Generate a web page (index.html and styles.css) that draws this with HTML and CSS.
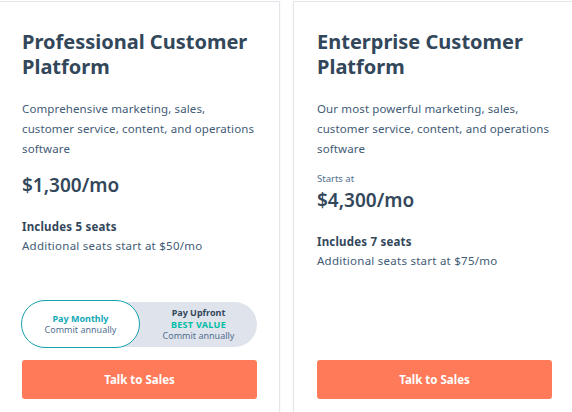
FILE: index.html
```html
<!DOCTYPE html>
<html lang="en">
<head>
<meta charset="utf-8">
<title>Plans</title>
<link rel="stylesheet" href="styles.css">
</head>
<body>
<div class="plans">
  <div class="card">
    <h2 class="title">Professional Customer Platform</h2>
    <p class="desc">Comprehensive marketing, sales, customer service, content, and operations software</p>
    <div class="price">$1,300/mo</div>
    <div class="seats">Includes 5 seats</div>
    <div class="extra">Additional seats start at $50/mo</div>
    <div class="footer">
      <div class="toggle">
        <div class="opt opt-active">
          <span class="opt-label teal">Pay Monthly</span>
          <span class="opt-sub">Commit annually</span>
        </div>
        <div class="opt">
          <span class="opt-label">Pay Upfront</span>
          <span class="opt-best">BEST VALUE</span>
          <span class="opt-sub">Commit annually</span>
        </div>
      </div>
      <button class="cta">Talk to Sales</button>
    </div>
  </div>
  <div class="card">
    <h2 class="title">Enterprise Customer Platform</h2>
    <p class="desc">Our most powerful marketing, sales, customer service, content, and operations software</p>
    <div class="starts">Starts at</div>
    <div class="price price-2">$4,300/mo</div>
    <div class="seats">Includes 7 seats</div>
    <div class="extra">Additional seats start at $75/mo</div>
    <div class="footer">
      <button class="cta">Talk to Sales</button>
    </div>
  </div>
</div>
</body>
</html>
```

FILE: styles.css
```css
* { box-sizing: border-box; }
html, body { margin: 0; padding: 0; background: #ffffff; overflow: hidden; }
body {
  font-family: "Noto Sans", "Open Sans", sans-serif;
  color: #33475b;
}
.plans {
  display: flex;
  gap: 13px;
  margin-left: -2px;
  padding-top: 1px;
  width: 600px;
}
.card {
  width: 282px;
  height: 440px;
  border: 1px solid #e3e6ea;
  background: #fff;
  padding: 27px 22px 41px 23px;
  display: flex;
  flex-direction: column;
  box-shadow: 0 1px 3px rgba(45, 62, 80, 0.06);
}
.title {
  margin: 0;
  font-size: 20px;
  line-height: 25px;
  font-weight: 700;
  color: #33475b;
  letter-spacing: 0;
}
.desc {
  margin: 20px 0 0;
  font-size: 11.5px;
  line-height: 20px;
  letter-spacing: 0.12px;
  color: #425b76;
}
.price {
  margin-top: 13px;
  font-size: 19px;
  line-height: 26px;
  font-weight: 600;
  color: #33475b;
}
.starts {
  margin-top: 13px;
  font-size: 9.5px;
  line-height: 14px;
  color: #516f90;
}
.price-2 { margin-top: 1px; }
.seats {
  margin-top: 20px;
  font-size: 11.5px;
  line-height: 18px;
  font-weight: 700;
  letter-spacing: 0.2px;
  color: #33475b;
}
.extra {
  margin-top: 1px;
  font-size: 11.5px;
  line-height: 18px;
  letter-spacing: 0.25px;
  color: #425b76;
}
.footer {
  margin-top: auto;
  display: flex;
  flex-direction: column;
  gap: 13px;
}
.toggle {
  display: flex;
  align-items: center;
  height: 45px;
  background: #dfe3eb;
  border-radius: 23px;
}
.opt {
  flex: 1;
  display: flex;
  flex-direction: column;
  align-items: center;
  justify-content: center;
  height: 100%;
  font-size: 9px;
  line-height: 11.5px;
  color: #516f90;
}
.opt-active {
  flex: 0 0 119px;
  height: 48px;
  margin-top: -1px;
  background: #fff;
  border: 1.5px solid #16a2ad;
  border-radius: 24px;
  margin-left: -1px;
}
.opt-label {
  font-weight: 700;
  color: #33475b;
}
.opt-label.teal { color: #13a8b6; }
.opt-best {
  font-weight: 700;
  color: #00bda5;
  letter-spacing: 0.3px;
}
.opt-sub { color: #516f90; }
.cta {
  height: 39px;
  border: 0;
  border-radius: 3px;
  background: #ff7a59;
  color: #fff;
  font-family: inherit;
  font-size: 11.5px;
  font-weight: 700;
  cursor: pointer;
}
```
